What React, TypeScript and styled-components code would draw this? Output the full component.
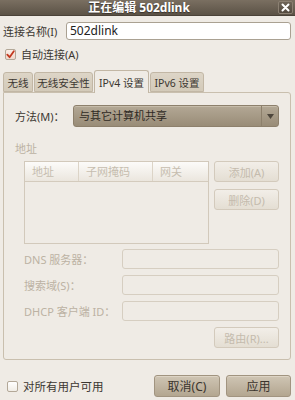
import { Fragment } from "react";
import styled, { createGlobalStyle } from "styled-components";

const GlobalStyle = createGlobalStyle`
    html, body {
        margin: 0;
        padding: 0;
        background: #efebe5;
    }
    * {
        box-sizing: border-box;
    }
`;

const FONT = `"Noto Sans", "Noto Sans CJK SC", sans-serif`;

const Window = styled.div`
    width: 295px;
    height: 400px;
    background: #efebe5;
    display: flex;
    flex-direction: column;
    font-family: ${FONT};
    font-size: 11px;
    color: #3c3731;
    overflow: hidden;
`;

const TitleBar = styled.div`
    height: 16px;
    display: flex;
    align-items: center;
    background: linear-gradient(#7a6f61, #5b5246);
    border-bottom: 1px solid #4a4238;
    padding-right: 2px;
`;

const TitleText = styled.div`
    flex: 1;
    text-align: center;
    color: #ffffff;
    font-weight: bold;
    font-size: 12px;
    line-height: 15px;
    text-shadow: 0 1px 1px #3a332b;
`;

const CloseButton = styled.div`
    width: 15px;
    height: 13px;
    border: 1px solid #8b8072;
    border-radius: 2px;
    background: linear-gradient(#6e6457, #534a3f);
    display: flex;
    align-items: center;
    justify-content: center;
`;

const Body = styled.div`
    flex: 1;
    display: flex;
    flex-direction: column;
    padding: 0 4px 0 3px;
`;

const NameRow = styled.div`
    margin-top: 6px;
    height: 18px;
    display: flex;
    align-items: center;
`;

const Label = styled.div<{ $disabled?: boolean; $width?: number }>`
    width: ${p => (p.$width ? `${p.$width}px` : "auto")};
    flex-shrink: 0;
    color: ${p => (p.$disabled ? "#bcb2a3" : "#3c3731")};
    white-space: nowrap;
`;

const TextInput = styled.div`
    flex: 1;
    height: 18px;
    background: #ffffff;
    border: 1px solid #aaa192;
    border-radius: 3px;
    padding-left: 3px;
    font-size: 12px;
    line-height: 16px;
    color: #222;
`;

const CheckRow = styled.div`
    display: flex;
    align-items: center;
    gap: 5px;
    height: 12px;
`;

const AutoConnectRow = styled(CheckRow)`
    margin-top: 8px;
    padding-left: 2px;
`;

const CheckBox = styled.div<{ $checked?: boolean }>`
    width: 11px;
    height: 11px;
    border: 1px solid #b3a898;
    border-radius: 2px;
    background: ${p => (p.$checked ? "linear-gradient(#fbeee6, #f0d8cc)" : "linear-gradient(#ffffff, #f1ede6)")};
    display: flex;
    align-items: center;
    justify-content: center;
`;

const TabBar = styled.div`
    margin-top: 10px;
    height: 22px;
    display: flex;
    align-items: flex-end;
    gap: 1px;
    position: relative;
    z-index: 1;
`;

const Tab = styled.div<{ $active?: boolean; $width: number }>`
    width: ${p => p.$width}px;
    height: ${p => (p.$active ? "23px" : "20px")};
    margin-bottom: ${p => (p.$active ? "-1px" : "0")};
    display: flex;
    align-items: center;
    justify-content: center;
    background: ${p => (p.$active ? "#efebe5" : "linear-gradient(#ddd5c7, #d3cab9)")};
    border: 1px solid #c2b7a5;
    border-bottom: ${p => (p.$active ? "none" : "1px solid #c2b7a5")};
    border-radius: 3px 3px 0 0;
    color: #3c3731;
    font-size: 10.5px;
    white-space: nowrap;
`;

const Panel = styled.div`
    width: 288px;
    height: 268px;
    border: 1px solid #c9bfae;
    border-radius: 0 3px 3px 3px;
    display: flex;
    flex-direction: column;
`;

const MethodRow = styled.div`
    margin-top: 12px;
    padding: 0 11px;
    height: 22px;
    display: flex;
    align-items: center;
`;

const Combo = styled.div`
    flex: 1;
    height: 22px;
    display: flex;
    border: 1px solid #8d806c;
    border-radius: 3px;
    background: linear-gradient(#b3a895, #998c77);
    box-shadow: inset 0 1px 0 #c6bcaa;
`;

const ComboText = styled.div`
    flex: 1;
    padding-left: 5px;
    line-height: 20px;
    color: #2f2a24;
`;

const ComboArrow = styled.div`
    width: 17px;
    border-left: 1px solid #8d806c;
    display: flex;
    align-items: center;
    justify-content: center;
`;

const SectionLabel = styled.div`
    margin-top: 15px;
    padding-left: 11px;
    line-height: 14px;
    color: #bcb2a3;
`;

const AddressArea = styled.div`
    margin-top: 5px;
    padding-left: 20px;
    display: flex;
    gap: 5px;
`;

const Table = styled.div`
    width: 185px;
    height: 83px;
    border: 1px solid #d2c9bb;
`;

const TableHeader = styled.div`
    height: 20px;
    display: grid;
    grid-template-columns: 54px 74px 1fr;
    background: linear-gradient(#fcfbf9, #ebe6de);
    border-bottom: 1px solid #d4cbbd;
`;

const HeaderCell = styled.div`
    padding-left: 7px;
    line-height: 19px;
    color: #c6bdaf;
    border-right: 1px solid #dcd4c7;

    &:last-child {
        border-right: none;
    }
`;

const ButtonColumn = styled.div`
    display: flex;
    flex-direction: column;
    gap: 7px;
`;

const Button = styled.div<{ $disabled?: boolean; $width?: number }>`
    width: ${p => p.$width ?? 65}px;
    height: ${p => (p.$disabled ? 21 : 22)}px;
    border-radius: 3px;
    display: flex;
    align-items: center;
    justify-content: center;
    border: 1px solid ${p => (p.$disabled ? "#d3cabc" : "#a19480")};
    background: ${p =>
        p.$disabled
            ? "linear-gradient(#f2eee8, #e4ded3)"
            : "linear-gradient(#cfc5b4, #b3a690)"};
    color: ${p => (p.$disabled ? "#c4bbad" : "#3a342d")};
    font-size: ${p => (p.$disabled ? 11 : 12)}px;
    box-shadow: ${p => (p.$disabled ? "none" : "inset 0 1px 0 #ddd4c5")};
`;

const FormGrid = styled.div`
    margin-top: 5px;
    padding-left: 20px;
    display: grid;
    grid-template-columns: 98px 157px;
    grid-auto-rows: 20px;
    row-gap: 6px;
    align-items: center;
`;

const DisabledInput = styled.div`
    height: 20px;
    border: 1px solid #d6cec1;
    border-radius: 3px;
    background: #efebe5;
`;

const RouteRow = styled.div`
    margin-top: 6px;
    padding-right: 11px;
    display: flex;
    justify-content: flex-end;
`;

const Footer = styled.div`
    margin-top: 15px;
    height: 22px;
    display: flex;
    align-items: center;
`;

const FooterCheck = styled(CheckRow)`
    flex: 1;
    padding-left: 4px;
    font-size: 11.5px;
`;

const FooterButtons = styled.div`
    display: flex;
    gap: 6px;
`;

function CloseIcon() {
    return (
        <svg width="9" height="9" viewBox="0 0 9 9">
            <path d="M1.5 1.5 L7.5 7.5 M7.5 1.5 L1.5 7.5" stroke="#ffffff" strokeWidth="2" strokeLinecap="round" />
        </svg>
    );
}

function CheckMark() {
    return (
        <svg width="9" height="9" viewBox="0 0 9 9">
            <path d="M1.3 4.6 L3.6 7.2 L7.8 1.2" fill="none" stroke="#c2391f" strokeWidth="1.8" strokeLinecap="round" strokeLinejoin="round" />
        </svg>
    );
}

function ArrowDown() {
    return (
        <svg width="7" height="5" viewBox="0 0 7 5">
            <path d="M0 0 H7 L3.5 5 Z" fill="#4e463c" />
        </svg>
    );
}

const tabs = [
    { name: "无线", width: 30 },
    { name: "无线安全性", width: 59 },
    { name: "IPv4 设置", width: 55, active: true },
    { name: "IPv6 设置", width: 54 },
];

const fields = ["DNS 服务器：", "搜索域(S)：", "DHCP 客户端 ID："];

export default function App() {
    return (
        <>
            <GlobalStyle />
            <Window>
                <TitleBar>
                    <TitleText>正在编辑 502dlink</TitleText>
                    <CloseButton>
                        <CloseIcon />
                    </CloseButton>
                </TitleBar>

                <Body>
                    <NameRow>
                        <Label $width={63}>连接名称(I)</Label>
                        <TextInput>502dlink</TextInput>
                    </NameRow>

                    <AutoConnectRow>
                        <CheckBox $checked>
                            <CheckMark />
                        </CheckBox>
                        <Label>自动连接(A)</Label>
                    </AutoConnectRow>

                    <TabBar>
                        {tabs.map(t => (
                            <Tab key={t.name} $active={t.active} $width={t.width}>{t.name}</Tab>
                        ))}
                    </TabBar>

                    <Panel>
                        <MethodRow>
                            <Label $width={58}>方法(M)：</Label>
                            <Combo>
                                <ComboText>与其它计算机共享</ComboText>
                                <ComboArrow>
                                    <ArrowDown />
                                </ComboArrow>
                            </Combo>
                        </MethodRow>

                        <SectionLabel>地址</SectionLabel>

                        <AddressArea>
                            <Table>
                                <TableHeader>
                                    <HeaderCell>地址</HeaderCell>
                                    <HeaderCell>子网掩码</HeaderCell>
                                    <HeaderCell>网关</HeaderCell>
                                </TableHeader>
                            </Table>
                            <ButtonColumn>
                                <Button $disabled>添加(A)</Button>
                                <Button $disabled>删除(D)</Button>
                            </ButtonColumn>
                        </AddressArea>

                        <FormGrid>
                            {fields.map(f => (
                                <Fragment key={f}>
                                    <Label $disabled>{f}</Label>
                                    <DisabledInput />
                                </Fragment>
                            ))}
                        </FormGrid>

                        <RouteRow>
                            <Button $disabled>路由(R)...</Button>
                        </RouteRow>
                    </Panel>

                    <Footer>
                        <FooterCheck>
                            <CheckBox />
                            <span>对所有用户可用</span>
                        </FooterCheck>
                        <FooterButtons>
                            <Button $width={66}>取消(C)</Button>
                            <Button $width={65}>应用</Button>
                        </FooterButtons>
                    </Footer>
                </Body>
            </Window>
        </>
    );
}
